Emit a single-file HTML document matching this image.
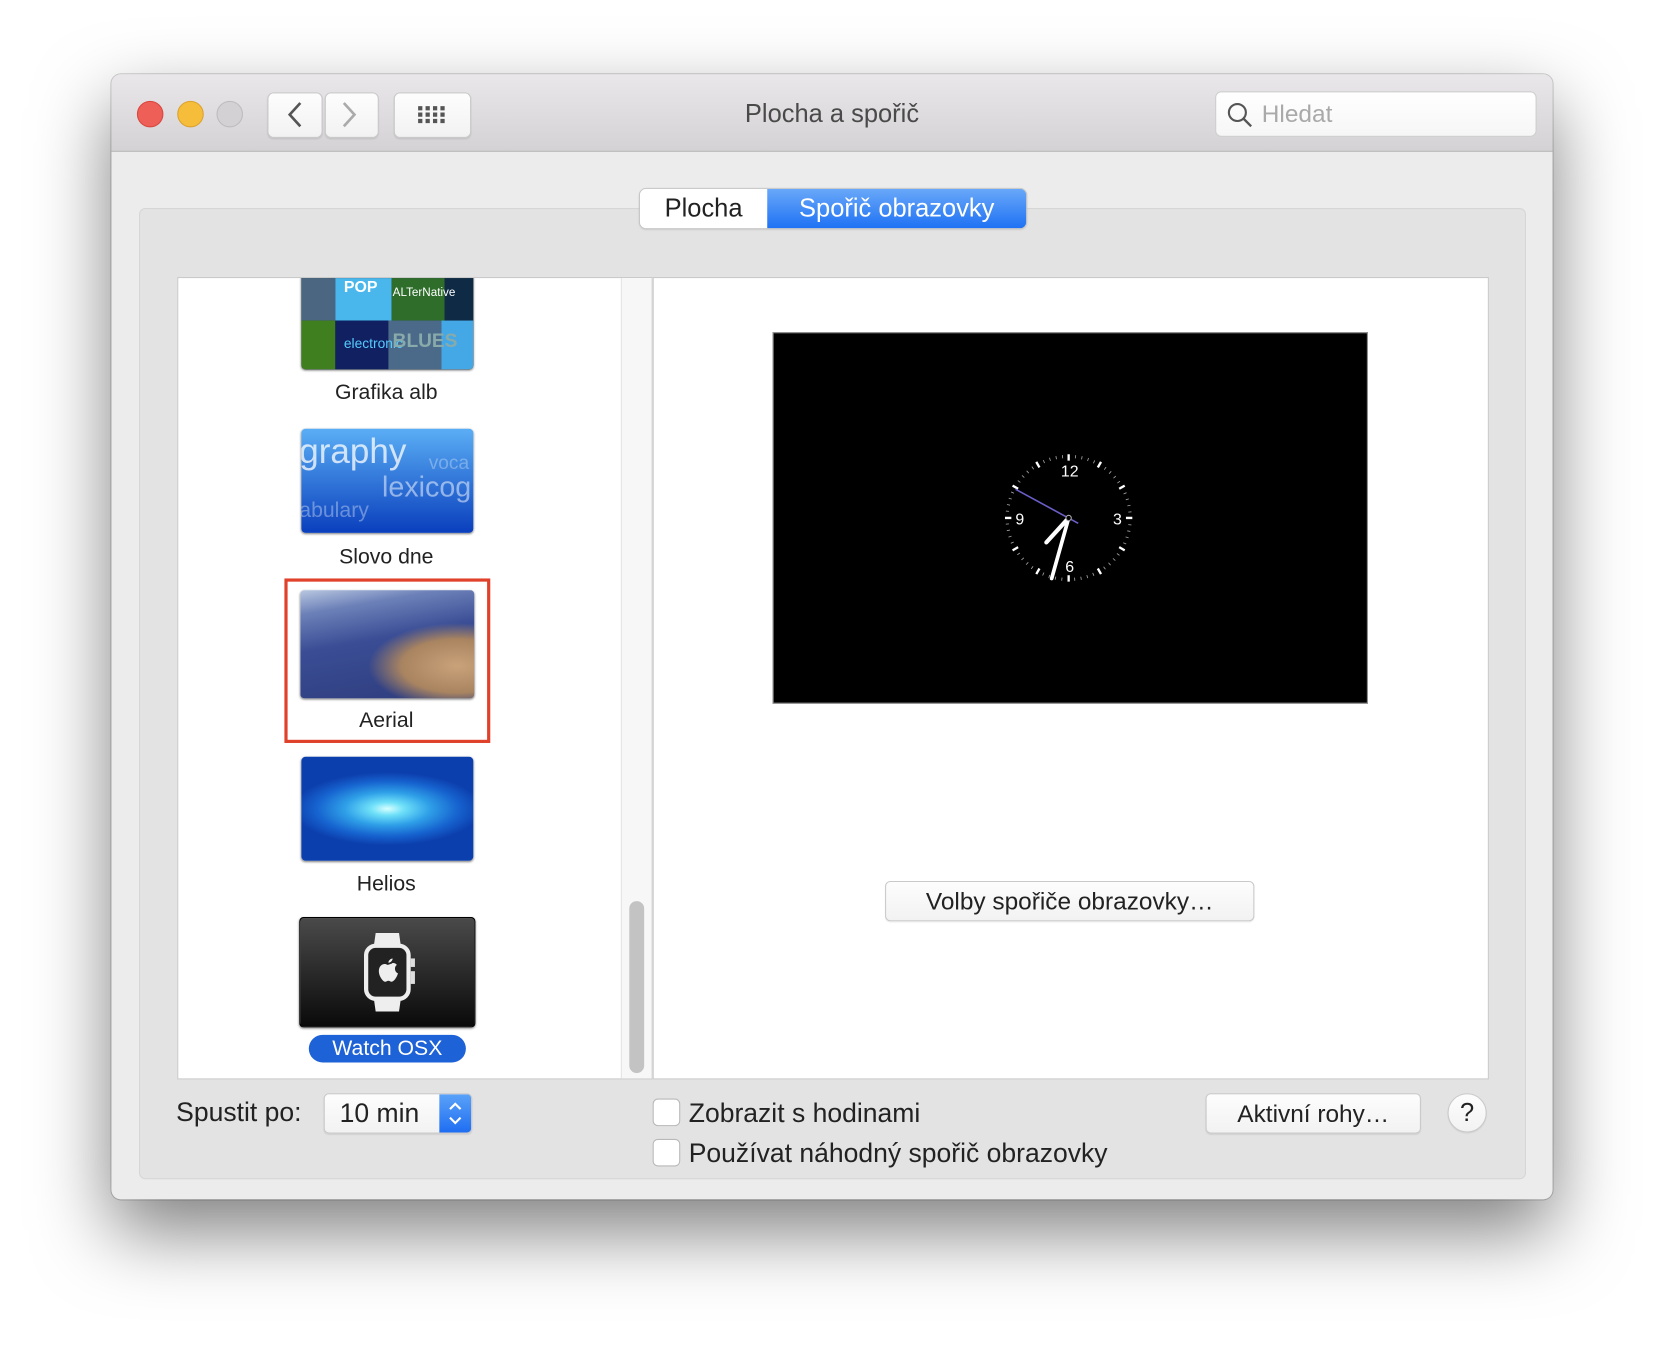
<!DOCTYPE html>
<html><head><meta charset="utf-8">
<style>
html,body{margin:0;padding:0;background:#fff;width:1664px;height:1348px;overflow:hidden}
#s{position:absolute;left:0;top:0;width:1568px;height:1270px;transform:scale(1.06122,1.0614);transform-origin:0 0;font-family:"Liberation Sans",sans-serif;color:#222}
.a{position:absolute}
.win{left:105px;top:70px;width:1358px;height:1060px;border-radius:9px;background:#ececec;box-shadow:0 30px 70px rgba(0,0,0,.5),0 0 0 1px rgba(0,0,0,.18);overflow:hidden}
.tb{left:0;top:0;width:1358px;height:72px;background:linear-gradient(#e9e7e9,#d4d2d4);border-bottom:1px solid #b3b3b3}
.tl{width:23px;height:23px;border-radius:50%;top:25px}
.btn{background:linear-gradient(#fdfdfd,#f2f2f2);border:1px solid #c9c9c9;border-radius:6px;box-shadow:0 1px 1px rgba(0,0,0,.08)}
.lab{font-size:20px;text-align:center;width:300px;color:#222}
.th{border-radius:4px;box-shadow:0 1px 2px rgba(0,0,0,.5);overflow:hidden}
.txt{font-size:25px;color:#222;white-space:nowrap}
.cb{width:24px;height:24px;border:1px solid #b8b8b8;border-radius:5px;background:#fff}
</style></head><body>
<div id="s">
<div class="a win">
 <div class="a tb">
  <div class="a tl" style="left:24px;background:#ee5f57;border:1px solid #d8463e"></div>
  <div class="a tl" style="left:62px;background:#f6bd3b;border:1px solid #dca12b"></div>
  <div class="a tl" style="left:99px;background:#d3d1d3;border:1px solid #bdbbbd"></div>
  <div class="a btn" style="left:147px;top:17px;width:50px;height:41px"></div>
  <div class="a btn" style="left:201px;top:17px;width:49px;height:41px"></div>
  <svg class="a" style="left:147px;top:17px" width="104" height="42"><path d="M31 10 L21 21 L31 32" stroke="#555" stroke-width="2.5" fill="none"/><path d="M72 10 L82 21 L72 32" stroke="#aaa" stroke-width="2.5" fill="none"/></svg>
  <div class="a btn" style="left:266px;top:17px;width:71px;height:41px"></div>
  <svg class="a" style="left:266px;top:17px" width="72" height="42"><g fill="#555">
   <rect x="23" y="13" width="4" height="4"/><rect x="30" y="13" width="4" height="4"/><rect x="37" y="13" width="4" height="4"/><rect x="44" y="13" width="4" height="4"/>
   <rect x="23" y="19" width="4" height="4"/><rect x="30" y="19" width="4" height="4"/><rect x="37" y="19" width="4" height="4"/><rect x="44" y="19" width="4" height="4"/>
   <rect x="23" y="25" width="4" height="4"/><rect x="30" y="25" width="4" height="4"/><rect x="37" y="25" width="4" height="4"/><rect x="44" y="25" width="4" height="4"/></g></svg>
  <div class="a" style="left:479px;top:24px;width:400px;text-align:center;font-size:24px;color:#4a4a4a">Plocha a spořič</div>
  <div class="a" style="left:1040px;top:16px;width:301px;height:41px;background:linear-gradient(#fff,#f6f6f6);border:1px solid #cfcfcf;border-radius:6px"></div>
  <svg class="a" style="left:1050px;top:24px" width="30" height="30"><circle cx="11" cy="12" r="8" stroke="#555" stroke-width="2" fill="none"/><path d="M17 18 L24 25" stroke="#555" stroke-width="2.2"/></svg>
  <div class="a" style="left:1084px;top:24px;font-size:23px;color:#a9a9a9">Hledat</div>
 </div>
 <div class="a" style="left:26px;top:126px;width:1305px;height:913px;background:#e3e3e3;border:1px solid #d6d6d6;border-radius:6px"></div>
 <div class="a" style="left:498px;top:108px;width:364px;height:37px;border-radius:6px;box-shadow:0 0 0 1px #c6c6c6,0 1px 2px rgba(0,0,0,.15);overflow:hidden">
  <div class="a" style="left:0;top:0;width:120px;height:37px;background:#fff;font-size:24px;text-align:center;line-height:37px;color:#222">Plocha</div>
  <div class="a" style="left:120px;top:0;width:244px;height:37px;background:linear-gradient(#69a8f9,#1f72f4);font-size:24px;text-align:center;line-height:37px;color:#fff">Spořič obrazovky</div>
 </div>
 <div class="a" style="left:62px;top:191px;width:447px;height:754px;background:#fff;border:1px solid #c9c9c9;overflow:hidden">
  <div class="a" style="left:417px;top:0;width:30px;height:754px;background:#f7f7f7;border-left:1px solid #e3e3e3;border-right:1px solid #d4d4d4;box-sizing:border-box"></div>
  <div class="a" style="left:425px;top:587px;width:14px;height:162px;border-radius:7px;background:#c3c3c3"></div>
  <div class="a th" style="left:116px;top:-6px;width:162px;height:92px;background:#123">
   <div class="a" style="left:0;top:0;width:32px;height:46px;background:#4a6680"></div>
   <div class="a" style="left:32px;top:0;width:53px;height:46px;background:#49b7ec"></div>
   <div class="a" style="left:85px;top:0;width:50px;height:46px;background:#2e6d2a"></div>
   <div class="a" style="left:135px;top:0;width:27px;height:46px;background:#0f2a44"></div>
   <div class="a" style="left:0;top:46px;width:32px;height:46px;background:#3f7f1f"></div>
   <div class="a" style="left:32px;top:46px;width:50px;height:46px;background:#102060"></div>
   <div class="a" style="left:82px;top:46px;width:50px;height:46px;background:#4b6a8a"></div>
   <div class="a" style="left:132px;top:46px;width:30px;height:46px;background:#45a8e6"></div>
   <div class="a" style="left:40px;top:6px;font-size:15px;font-weight:bold;color:#fff">POP</div>
   <div class="a" style="left:86px;top:14px;font-size:11px;color:#fff">ALTerNative</div>
   <div class="a" style="left:40px;top:60px;font-size:13px;color:#5cf">electronic</div>
   <div class="a" style="left:86px;top:55px;font-size:18px;font-weight:bold;color:#8aa">BLUES</div>
  </div>
  <div class="a lab" style="left:46px;top:97px">Grafika alb</div>
  <div class="a th" style="left:116px;top:142px;width:162px;height:98px;background:linear-gradient(#5aaef5,#0a3fbd)">
   <div class="a" style="left:-2px;top:2px;font-size:33px;color:rgba(255,255,255,.75)">graphy</div>
   <div class="a" style="left:120px;top:22px;font-size:18px;color:rgba(255,255,255,.3)">voca</div>
   <div class="a" style="left:76px;top:40px;font-size:27px;color:rgba(255,255,255,.5)">lexicog</div>
   <div class="a" style="left:-2px;top:66px;font-size:20px;color:rgba(255,255,255,.35)">abulary</div>
  </div>
  <div class="a lab" style="left:46px;top:252px">Slovo dne</div>
  <div class="a" style="left:100px;top:283px;width:194px;height:155px;border:3px solid #e0412a;box-sizing:border-box"></div>
  <div class="a th" style="left:115px;top:294px;width:164px;height:102px;background:radial-gradient(ellipse at 90% 70%,#c9a27a 0,#a98460 25%,transparent 40%),linear-gradient(170deg,#b8c7e0 0,#6c80b8 18%,#3a4d95 45%,#2e3c7c 100%)"></div>
  <div class="a lab" style="left:46px;top:406px">Aerial</div>
  <div class="a th" style="left:116px;top:451px;width:162px;height:98px;background:radial-gradient(ellipse 55% 35% at 50% 50%,#d8ffff 0,#6ee0f8 18%,#2fa0e8 45%,#1663cf 75%,#0c3fae 100%)"></div>
  <div class="a lab" style="left:46px;top:560px">Helios</div>
  <div class="a th" style="left:114px;top:602px;width:166px;height:104px;background:linear-gradient(#4a4a4a,#0a0a0a);border:1px solid #000;box-sizing:border-box">
   <svg class="a" style="left:55px;top:12px" width="56" height="78"><path d="M16 2 H38 L40 16 H14 Z M14 62 H40 L38 76 H16 Z" fill="#eee"/><rect x="7" y="14" width="40" height="50" rx="9" fill="#222" stroke="#eee" stroke-width="4"/><rect x="49" y="26" width="4" height="8" fill="#ddd"/><rect x="49" y="38" width="4" height="12" fill="#ddd"/><path d="M27 32 c-3 -2 -8 0 -8 6 c0 5 4 10 6 10 c1 0 2-1 3-1 c1 0 2 1 3 1 c2 0 5-4 6-8 c-3-1-4-6 -1-8 c-2-2-4-2-5-1 c-1 0-2 1-4 1 z M28 30 c0-2 2-4 4-4 c0 2-2 4-4 4z" fill="#eee"/></svg>
  </div>
  <div class="a" style="left:123px;top:713px;width:148px;height:26px;border-radius:13px;background:#1d62d6;color:#fff;font-size:20px;text-align:center;line-height:26px">Watch OSX</div>
 </div>
 <div class="a" style="left:510px;top:191px;width:786px;height:754px;background:#fff;border:1px solid #c9c9c9"></div>
 <div class="a" style="left:623px;top:243px;width:559px;height:348px;background:#000;border:1px solid #999"></div>
 <svg class="a" style="left:842px;top:358px" width="120" height="120" viewBox="-60 -60 120 120">
  <circle r="58" fill="none" stroke="#ccc" stroke-width="3" stroke-dasharray="0.8 5.27" opacity=".8" transform="rotate(-90)"/>
  <g stroke="#fff" stroke-width="2.2">
   <line x1="0" y1="-61" x2="0" y2="-54"/><line x1="0" y1="61" x2="0" y2="54"/><line x1="-61" y1="0" x2="-54" y2="0"/><line x1="61" y1="0" x2="54" y2="0"/>
   <g transform="rotate(30)"><line x1="0" y1="-61" x2="0" y2="-55"/><line x1="0" y1="61" x2="0" y2="55"/></g>
   <g transform="rotate(60)"><line x1="0" y1="-61" x2="0" y2="-55"/><line x1="0" y1="61" x2="0" y2="55"/></g>
   <g transform="rotate(120)"><line x1="0" y1="-61" x2="0" y2="-55"/><line x1="0" y1="61" x2="0" y2="55"/></g>
   <g transform="rotate(150)"><line x1="0" y1="-61" x2="0" y2="-55"/><line x1="0" y1="61" x2="0" y2="55"/></g>
  </g>
  <g fill="#fff" font-size="15" text-anchor="middle" font-family="Liberation Sans,sans-serif"><text x="1" y="-39">12</text><text x="46" y="6">3</text><text x="1" y="51">6</text><text x="-46" y="6">9</text></g>
  <line x1="-50" y1="-27" x2="9" y2="5" stroke="#6a5fc8" stroke-width="1.5"/>
  <line x1="0" y1="0" x2="-21" y2="23" stroke="#fff" stroke-width="4" stroke-linecap="round"/>
  <line x1="0" y1="0" x2="-16" y2="57" stroke="#fff" stroke-width="3.5" stroke-linecap="round"/>
  <circle r="2.5" fill="#000" stroke="#aaa" stroke-width="1"/>
 </svg>
 <div class="a btn" style="left:729px;top:760px;width:346px;height:36px;font-size:23px;text-align:center;line-height:36px;border-radius:5px">Volby spořiče obrazovky…</div>
 <div class="a txt" style="left:61px;top:964px">Spustit po:</div>
 <div class="a btn" style="left:200px;top:960px;width:138px;height:36px;border-radius:5px;overflow:hidden">
  <div class="a txt" style="left:14px;top:4px">10 min</div>
  <div class="a" style="left:108px;top:0;width:30px;height:36px;background:linear-gradient(#5aa2f8,#1f6ef2)"></div>
  <svg class="a" style="left:108px;top:0" width="30" height="36"><path d="M10 14 L15 9 L20 14 M10 22 L15 27 L20 22" stroke="#fff" stroke-width="2" fill="none"/></svg>
 </div>
 <div class="a cb" style="left:510px;top:965px"></div>
 <div class="a txt" style="left:544px;top:965px">Zobrazit s hodinami</div>
 <div class="a cb" style="left:510px;top:1003px"></div>
 <div class="a txt" style="left:544px;top:1003px">Používat náhodný spořič obrazovky</div>
 <div class="a btn" style="left:1031px;top:960px;width:201px;height:36px;border-radius:5px;font-size:23px;text-align:center;line-height:36px">Aktivní rohy…</div>
 <div class="a btn" style="left:1259px;top:960px;width:35px;height:35px;border-radius:50%;font-size:24px;text-align:center;line-height:35px">?</div>
</div>
</div>
</body></html>
